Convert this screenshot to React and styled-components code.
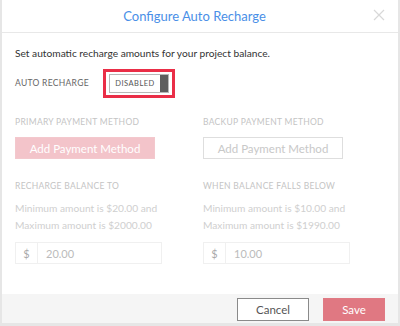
import React from "react";
import styled, { createGlobalStyle } from "styled-components";

const Global = createGlobalStyle`
  html, body { margin: 0; padding: 0; background: #e6e6e6; }
  body { font-family: Lato, "Open Sans", sans-serif; }
  * { box-sizing: border-box; }
`;

const Modal = styled.div`
  margin: 0 2px;
  width: 396px;
  height: 323px;
  background: #fff;
  display: flex;
  flex-direction: column;
`;

const Header = styled.div`
  height: 33px;
  padding-right: 11px;
  border-bottom: 1px solid #e8e8e8;
  display: flex;
  align-items: center;
  justify-content: center;
  position: relative;
`;

const Title = styled.h1`
  margin: 0;
  font-size: 13px;
  font-weight: 400;
  color: #4a8fe7;
`;

const Close = styled.button`
  position: absolute;
  right: 12px;
  top: 9px;
  width: 14px;
  height: 14px;
  padding: 0;
  border: 0;
  background: none;
`;

const Body = styled.div`
  flex: 1;
  padding: 12px 13px 0;
`;

const Intro = styled.p`
  margin: 0;
  font-size: 10.2px;
  color: #333;
  line-height: 16px;
`;

const ToggleRow = styled.div`
  display: flex;
  align-items: center;
  margin-top: 8px;
`;

const Label = styled.div`
  font-size: 8.5px;
  line-height: 11px;
  letter-spacing: 0.3px;
  text-transform: uppercase;
  white-space: nowrap;
  color: ${(p) => (p.muted ? "#c4c4c4" : "#666")};
  width: ${(p) => (p.w ? p.w : "auto")};
`;

const Highlight = styled.div`
  border: 3px solid #ea2e47;
  padding: 2px 3px;
`;

const Toggle = styled.div`
  display: flex;
  width: 60px;
  height: 19px;
  border: 1px solid #b8b8b8;
  box-shadow: inset 0 0 0 1px #fff;
`;

const ToggleText = styled.span`
  flex: 1;
  font-size: 7.5px;
  letter-spacing: 0.5px;
  color: #555;
  display: flex;
  align-items: center;
  justify-content: center;
`;

const Knob = styled.span`
  width: 8px;
  background: #5e5e5e;
`;

const Grid = styled.div`
  display: grid;
  grid-template-columns: 188px 1fr;
  margin-top: ${(p) => p.top};
`;

const Col = styled.div`
  display: flex;
  flex-direction: column;
`;

const PayButton = styled.button`
  margin-top: 9px;
  width: 140px;
  height: 22px;
  font-family: inherit;
  font-size: 11.5px;
  padding: 0;
  border: 1px solid ${(p) => (p.primary ? "#f3c8cd" : "#dedede")};
  background: ${(p) => (p.primary ? "#f3c4ca" : "#fff")};
  color: ${(p) => (p.primary ? "#fff" : "#c8c8c8")};
`;

const Help = styled.p`
  margin: 8px 0 0;
  font-size: 10.2px;
  line-height: 17px;
  color: #cfcfcf;
`;

const InputGroup = styled.div`
  margin-top: 8px;
  display: flex;
  width: 147px;
  height: 22px;
  border: 1px solid #f0f0f0;
`;

const Addon = styled.span`
  width: 22px;
  border-right: 1px solid #f0f0f0;
  display: flex;
  align-items: center;
  justify-content: center;
  font-size: 11px;
  color: #aaa;
`;

const Value = styled.span`
  flex: 1;
  padding-left: 8px;
  display: flex;
  align-items: center;
  font-size: 11px;
  color: #bbb;
`;

const Footer = styled.div`
  height: 29px;
  background: #f5f5f5;
  display: flex;
  justify-content: flex-end;
  align-items: flex-start;
  padding: 4px 13px 0 0;
  gap: 14px;
`;

const FootButton = styled.button`
  height: 23px;
  width: ${(p) => p.w};
  font-family: inherit;
  font-size: 11.5px;
  padding: 0;
  border: 1px solid ${(p) => (p.save ? "#e07a84" : "#8a8a8a")};
  background: ${(p) => (p.save ? "#e07882" : "#fff")};
  color: ${(p) => (p.save ? "#fff" : "#555")};
`;

export default function App() {
  return (
    <>
      <Global />
      <Modal>
        <Header>
          <Title>Configure Auto Recharge</Title>
          <Close aria-label="close">
            <svg width="12" height="12" viewBox="0 0 12 12">
              <path d="M1 1L11 11M11 1L1 11" stroke="#d8d8d8" strokeWidth="1.2" />
            </svg>
          </Close>
        </Header>
        <Body>
          <Intro>Set automatic recharge amounts for your project balance.</Intro>
          <ToggleRow>
            <Label w="88px">Auto Recharge</Label>
            <Highlight>
              <Toggle>
                <ToggleText>DISABLED</ToggleText>
                <Knob />
              </Toggle>
            </Highlight>
          </ToggleRow>
          <Grid top="19px">
            <Col>
              <Label muted>Primary Payment Method</Label>
              <PayButton primary>Add Payment Method</PayButton>
            </Col>
            <Col>
              <Label muted>Backup Payment Method</Label>
              <PayButton>Add Payment Method</PayButton>
            </Col>
          </Grid>
          <Grid top="22px">
            <Col>
              <Label muted>Recharge Balance To</Label>
              <Help>
                Minimum amount is $20.00 and
                <br />
                Maximum amount is $2000.00
              </Help>
              <InputGroup>
                <Addon>$</Addon>
                <Value>20.00</Value>
              </InputGroup>
            </Col>
            <Col>
              <Label muted>When Balance Falls Below</Label>
              <Help>
                Minimum amount is $10.00 and
                <br />
                Maximum amount is $1990.00
              </Help>
              <InputGroup>
                <Addon>$</Addon>
                <Value>10.00</Value>
              </InputGroup>
            </Col>
          </Grid>
        </Body>
        <Footer>
          <FootButton w="72px">Cancel</FootButton>
          <FootButton save w="62px">Save</FootButton>
        </Footer>
      </Modal>
    </>
  );
}
